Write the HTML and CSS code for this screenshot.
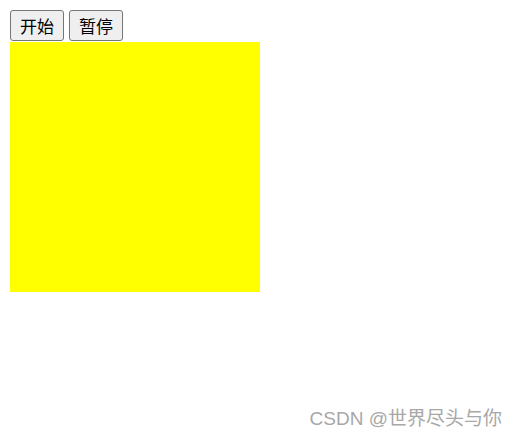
FILE: index.html
```html
<!DOCTYPE html>
<html lang="zh">
<head>
    <meta charset="UTF-8">
    <meta name="viewport" content="width=device-width, initial-scale=1.0">
    <title>动画</title>
    <link rel="stylesheet" href="styles.css">
</head>
<body>
    <div class="controls">
        <button id="startBtn">开始</button>
        <button id="stopBtn">暂停</button>
    </div>
    <div class="box" id="box"></div>

    <div class="watermark">CSDN @世界尽头与你</div>
</body>
</html>
```

FILE: styles.css
```css
body {
    margin: 10px;
    background: #ffffff;
    font-family: "Microsoft YaHei", "Noto Sans CJK SC", sans-serif;
}
.controls {
    display: flex;
    gap: 5px;
    height: 32px;
    align-items: flex-start;
}
button {
    height: 31px;
    padding: 0 9px;
    font-size: 17px;
    font-family: "Noto Sans CJK SC", sans-serif;
    color: #000000;
    background-color: #efefef;
    border: 1px solid #767676;
    border-radius: 3px;
}
.box {
    width: 250px;
    height: 250px;
    background: #ffff00;
}
.watermark {
    position: absolute;
    right: 16px;
    bottom: 9px;
    font-size: 19px;
    font-family: "Liberation Sans", "Noto Sans CJK SC", sans-serif;
    color: #a8a8a8;
}
```
